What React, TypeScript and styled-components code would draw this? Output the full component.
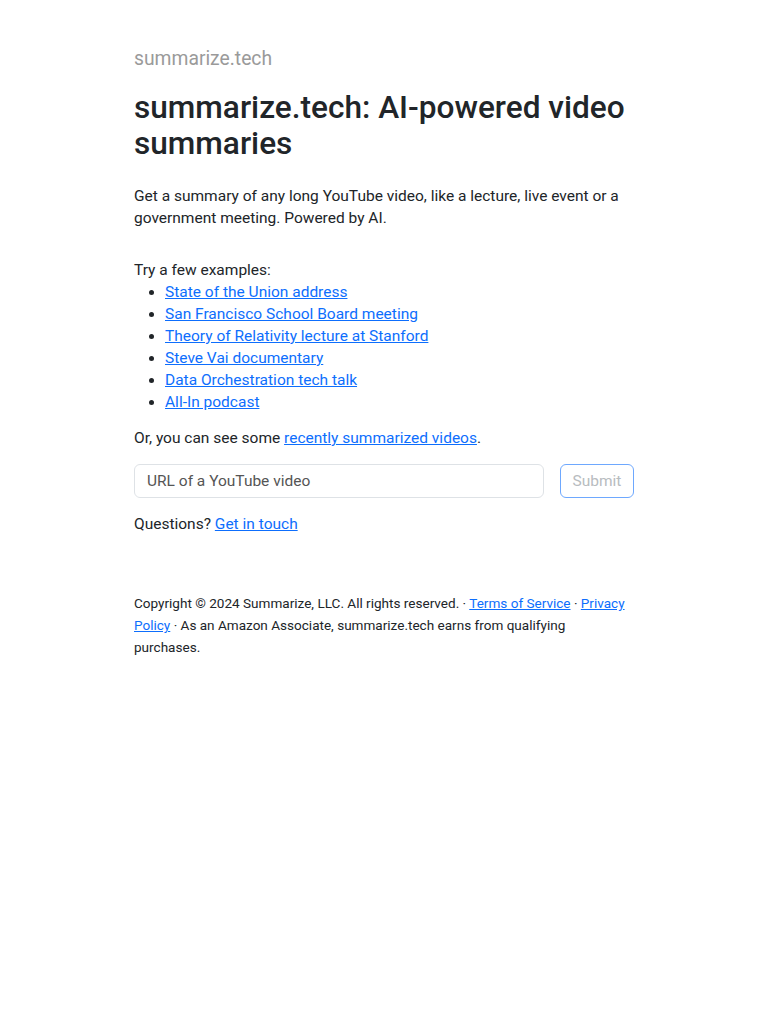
import React from "react";
import styled, { createGlobalStyle } from "styled-components";

const GlobalStyle = createGlobalStyle`
  * { box-sizing: border-box; }
  body {
    margin: 0;
    background: #fff;
    color: #212529;
    font-family: Roboto, "Noto Sans", "Liberation Sans", sans-serif;
    font-size: 15.5px;
    line-height: 22px;
  }
`;

const Container = styled.main`
  width: 500px;
  margin: 0 auto;
  padding-top: 47px;
`;

const Brand = styled.div`
  font-size: 19.3px;
  line-height: 24px;
  color: #9a9a9a;
  margin-bottom: 19px;
`;

const Title = styled.h1`
  font-size: 31.6px;
  line-height: 36px;
  font-weight: 500;
  margin: 0 0 23px;
`;

const Paragraph = styled.p<{ $gap?: number }>`
  margin: 0 0 ${(p) => p.$gap ?? 14}px;
`;

const Link = styled.a`
  color: #0d6efd;
  text-decoration: underline;
`;

const List = styled.ul`
  margin: 0 0 14px;
  padding-left: 31px;
`;

const Form = styled.form`
  display: flex;
  gap: 16px;
  margin-bottom: 15px;
`;

const Input = styled.input`
  flex: 1;
  height: 34px;
  padding: 0 12px;
  font: inherit;
  color: #212529;
  border: 1px solid #dee2e6;
  border-radius: 6px;
  &::placeholder { color: #555; }
`;

const SubmitButton = styled.button`
  width: 74px;
  height: 34px;
  padding: 0;
  font: inherit;
  color: #b8bcc0;
  background: #fff;
  border: 1px solid #6ea8fe;
  border-radius: 6px;
`;

const Footer = styled.footer`
  margin-top: 57px;
  font-size: 13.55px;
  line-height: 22px;
`;

const examples = [
  "State of the Union address",
  "San Francisco School Board meeting",
  "Theory of Relativity lecture at Stanford",
  "Steve Vai documentary",
  "Data Orchestration tech talk",
  "All-In podcast",
];

export default function App() {
  return (
    <>
      <GlobalStyle />
      <Container>
        <Brand>summarize.tech</Brand>
        <Title>summarize.tech: AI-powered video summaries</Title>
        <Paragraph $gap={30}>
          Get a summary of any long YouTube video, like a lecture, live event or a
          government meeting. Powered by AI.
        </Paragraph>
        <Paragraph $gap={0}>Try a few examples:</Paragraph>
        <List>
          {examples.map((e) => (
            <li key={e}>
              <Link href="#">{e}</Link>
            </li>
          ))}
        </List>
        <Paragraph $gap={15}>
          Or, you can see some <Link href="#">recently summarized videos</Link>.
        </Paragraph>
        <Form onSubmit={(ev) => ev.preventDefault()}>
          <Input placeholder="URL of a YouTube video" />
          <SubmitButton type="submit" disabled>Submit</SubmitButton>
        </Form>
        <Paragraph>
          Questions? <Link href="#">Get in touch</Link>
        </Paragraph>
        <Footer>
          Copyright © 2024 Summarize, LLC. All rights reserved. · <Link href="#">Terms of Service</Link> ·{" "}
          <Link href="#">Privacy Policy</Link> · As an Amazon Associate, summarize.tech earns from qualifying
          purchases.
        </Footer>
      </Container>
    </>
  );
}
